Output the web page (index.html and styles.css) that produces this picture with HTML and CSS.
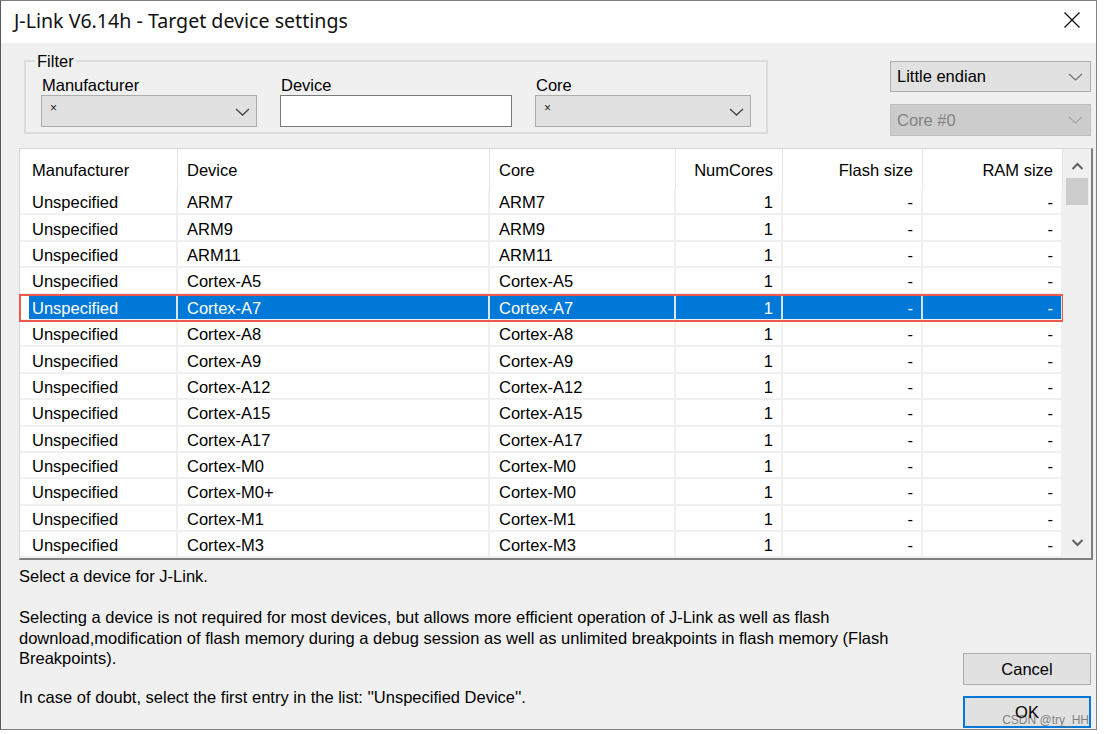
FILE: index.html
```html
<!DOCTYPE html>
<html>
<head>
<meta charset="utf-8">
<link rel="stylesheet" href="styles.css">
</head>
<body>
<div class="window">
  <div class="titlebar">
    <span class="title">J-Link V6.14h - Target device settings</span>
    <span class="close"><svg width="18" height="18" viewBox="0 0 18 18"><path d="M1.5 1.5L16.5 16.5M16.5 1.5L1.5 16.5" stroke="#111" stroke-width="1.3" fill="none"/></svg></span>
  </div>
  <div class="body">
    <div class="top">
      <fieldset class="filter">
        <legend>Filter</legend>
        <div class="field">
          <label>Manufacturer</label>
          <div class="combo w216"><span class="star">×</span><svg class="chev" width="15" height="8" viewBox="0 0 15 8"><path d="M1 1L7.5 7L14 1" fill="none" stroke="#444" stroke-width="1.3"/></svg></div>
        </div>
        <div class="field">
          <label>Device</label>
          <div class="input"></div>
        </div>
        <div class="field">
          <label>Core</label>
          <div class="combo w216"><span class="star">×</span><svg class="chev" width="15" height="8" viewBox="0 0 15 8"><path d="M1 1L7.5 7L14 1" fill="none" stroke="#444" stroke-width="1.3"/></svg></div>
        </div>
      </fieldset>
      <div class="side">
        <div class="combo endian"><span>Little endian</span><svg width="15" height="8" viewBox="0 0 15 8"><path d="M1 1L7.5 7L14 1" fill="none" stroke="#707070" stroke-width="1.1"/></svg></div>
        <div class="combo disabled"><span>Core #0</span><svg width="15" height="8" viewBox="0 0 15 8"><path d="M1 1L7.5 7L14 1" fill="none" stroke="#a6a6a6" stroke-width="1.1"/></svg></div>
      </div>
    </div>

    <div class="list">
      <div class="grid">
        <div class="row head">
          <div class="c">Manufacturer</div><div class="c">Device</div><div class="c">Core</div><div class="c r">NumCores</div><div class="c r">Flash size</div><div class="c r">RAM size</div>
        </div>
        <div class="row"><div class="c">Unspecified</div><div class="c">ARM7</div><div class="c">ARM7</div><div class="c r">1</div><div class="c r">-</div><div class="c r">-</div></div>
        <div class="row"><div class="c">Unspecified</div><div class="c">ARM9</div><div class="c">ARM9</div><div class="c r">1</div><div class="c r">-</div><div class="c r">-</div></div>
        <div class="row"><div class="c">Unspecified</div><div class="c">ARM11</div><div class="c">ARM11</div><div class="c r">1</div><div class="c r">-</div><div class="c r">-</div></div>
        <div class="row"><div class="c">Unspecified</div><div class="c">Cortex-A5</div><div class="c">Cortex-A5</div><div class="c r">1</div><div class="c r">-</div><div class="c r">-</div></div>
        <div class="row sel"><div class="c">Unspecified</div><div class="c">Cortex-A7</div><div class="c">Cortex-A7</div><div class="c r">1</div><div class="c r">-</div><div class="c r">-</div></div>
        <div class="row"><div class="c">Unspecified</div><div class="c">Cortex-A8</div><div class="c">Cortex-A8</div><div class="c r">1</div><div class="c r">-</div><div class="c r">-</div></div>
        <div class="row"><div class="c">Unspecified</div><div class="c">Cortex-A9</div><div class="c">Cortex-A9</div><div class="c r">1</div><div class="c r">-</div><div class="c r">-</div></div>
        <div class="row"><div class="c">Unspecified</div><div class="c">Cortex-A12</div><div class="c">Cortex-A12</div><div class="c r">1</div><div class="c r">-</div><div class="c r">-</div></div>
        <div class="row"><div class="c">Unspecified</div><div class="c">Cortex-A15</div><div class="c">Cortex-A15</div><div class="c r">1</div><div class="c r">-</div><div class="c r">-</div></div>
        <div class="row"><div class="c">Unspecified</div><div class="c">Cortex-A17</div><div class="c">Cortex-A17</div><div class="c r">1</div><div class="c r">-</div><div class="c r">-</div></div>
        <div class="row"><div class="c">Unspecified</div><div class="c">Cortex-M0</div><div class="c">Cortex-M0</div><div class="c r">1</div><div class="c r">-</div><div class="c r">-</div></div>
        <div class="row"><div class="c">Unspecified</div><div class="c">Cortex-M0+</div><div class="c">Cortex-M0</div><div class="c r">1</div><div class="c r">-</div><div class="c r">-</div></div>
        <div class="row"><div class="c">Unspecified</div><div class="c">Cortex-M1</div><div class="c">Cortex-M1</div><div class="c r">1</div><div class="c r">-</div><div class="c r">-</div></div>
        <div class="row"><div class="c">Unspecified</div><div class="c">Cortex-M3</div><div class="c">Cortex-M3</div><div class="c r">1</div><div class="c r">-</div><div class="c r">-</div></div>
      </div>
      <div class="scroll">
        <div class="arrow up"><svg width="13" height="8" viewBox="0 0 13 8"><path d="M1.5 7L6.5 2L11.5 7" fill="none" stroke="#606060" stroke-width="2"/></svg></div>
        <div class="thumb"></div>
        <div class="track"></div>
        <div class="arrow down"><svg width="13" height="8" viewBox="0 0 13 8"><path d="M1.5 1L6.5 6L11.5 1" fill="none" stroke="#606060" stroke-width="2"/></svg></div>
      </div>
    </div>

    <div class="bottom">
      <div class="info">
        <p>Select a device for J-Link.</p>
        <p>Selecting a device is not required for most devices, but allows more efficient operation of J-Link as well as flash<br>download,modification of flash memory during a debug session as well as unlimited breakpoints in flash memory (Flash<br>Breakpoints).</p>
        <p class="last">In case of doubt, select the first entry in the list: ''Unspecified Device''.</p>
      </div>
      <div class="buttons">
        <button class="btn">Cancel</button>
        <button class="btn ok"><span class="oklabel">OK</span><span class="watermark">CSDN @try_HH</span></button>
      </div>
    </div>
  </div>
</div>
</body>
</html>
```

FILE: styles.css
```css
* { box-sizing: border-box; }
html, body { margin: 0; background: #fff; }
body {
  font-family: "Liberation Sans", Arial, sans-serif;
  font-size: 16.5px;
  color: #000;
}
.window {
  width: 1097px;
  height: 730px;
  border: 1px solid #808080;
  border-left: 1px solid #5a5a5a;
  display: flex;
  flex-direction: column;
  background: #f0f0f0;
}
.titlebar {
  height: 42px;
  flex: none;
  background: #fff;
  display: flex;
  align-items: center;
  justify-content: space-between;
  padding: 0 15px 4px 13px;
}
.title {
  font-family: "Noto Sans", "Open Sans", sans-serif;
  font-size: 19.6px;
  color: #111;
}
.close { display: flex; }
.body {
  flex: 1;
  display: flex;
  flex-direction: column;
}
.top {
  display: flex;
  align-items: flex-start;
}
.filter {
  margin: 8px 0 0 23px;
  padding: 5px 15px;
  border: 2px solid #dcdcdc;
  width: 744px;
  min-width: 0;
  display: flex;
  gap: 23px;
}
.filter legend {
  padding: 0 2px;
  margin-left: -6px;
  line-height: 20px;
}
.field {
  display: flex;
  flex-direction: column;
}
.field label {
  height: 19px;
  line-height: 19px;
  padding-left: 1px;
}
.combo {
  height: 32px;
  border: 1px solid #adadad;
  background: #e1e1e1;
  display: flex;
  align-items: center;
  justify-content: space-between;
  padding: 0 6px 0 6px;
}
.w216 { width: 216px; padding-left: 8px; }
.w216 .chev { margin-top: 2px; }
.star {
  font-size: 12px;
  line-height: 12px;
  margin-bottom: 6px;
  color: #222;
}
.input {
  width: 232px;
  height: 32px;
  background: #fff;
  border: 1px solid #7a7a7a;
}
.side {
  margin: 18px 5px 0 auto;
  width: 201px;
  display: flex;
  flex-direction: column;
  gap: 12px;
}
.endian { height: 31px; padding-right: 7px; }
.disabled {
  height: 32px;
  background: #cccccc;
  border-color: #bfbfbf;
  color: #838383;
  padding-right: 7px;
}

/* list view */
.list {
  margin: 12px 3px 0 18px;
  display: flex;
  background: #fff;
  border-top: 1px solid #d6d6d6;
  border-left: 1px solid #d6d6d6;
  border-right: 2px solid #7f7f7f;
  border-bottom: 2px solid #7f7f7f;
}
.grid { width: 1043px; }
.row {
  display: grid;
  grid-template-columns: 158px 312px 186px 107px 140px 140px;
  height: 26.4px;
  border-bottom: 2px solid #f0f0f0;
}
.row .c {
  display: flex;
  align-items: center;
  padding: 3px 0 0 9px;
  white-space: nowrap;
  overflow: hidden;
  border-right: 2px solid #f0f0f0;
}
.row .c:first-child { padding-left: 12px; }
.row .c.r {
  justify-content: flex-end;
  padding-left: 0;
  padding-right: 8px;
}
.row.head {
  height: 40px;
  border-bottom: none;
}
.row.head .c {
  border-right: 1px solid #e6e6e6;
  padding-top: 2px;
}
.row.head .c.r { padding-right: 9px; }
.row.sel {
  background: #0078d7;
  color: #fff;
  outline: 2px solid #ec5a4e;
  outline-offset: -1px;
}
.row.sel .c { border-right-color: #d5e7f7; }
.row.sel .c:first-child {
  background: linear-gradient(to right, #fff 9px, #0078d7 9px);
}

.scroll {
  width: 28px;
  background: #f0f0f0;
  display: flex;
  flex-direction: column;
  align-items: center;
}
.arrow {
  height: 29px;
  width: 100%;
  display: flex;
  justify-content: center;
  align-items: center;
}
.arrow.up { padding-top: 5px; }
.arrow.down { padding-bottom: 1px; }
.thumb {
  width: 22px;
  height: 27px;
  background: #cdcdcd;
}
.track { flex: 1; }

/* bottom */
.bottom {
  flex: 1;
  display: flex;
  justify-content: space-between;
  padding: 6px 5px 3px 18px;
}
.info { white-space: nowrap; }
.info p {
  margin: 0 0 20.5px;
  line-height: 20.5px;
}
.info p.last { margin-top: -2px; }
.buttons {
  align-self: flex-end;
  width: 128px;
  display: flex;
  flex-direction: column;
  gap: 11px;
}
.btn {
  height: 32px;
  background: #e1e1e1;
  border: 1px solid #adadad;
  font: inherit;
  color: #000;
  padding: 0;
}
.btn.ok {
  border: 2px solid #0078d7;
  display: flex;
  align-items: flex-start;
  justify-content: flex-end;
  padding: 3px 0 0 0;
  position: relative;
}
.oklabel {
  position: absolute;
  left: 0;
  right: 0;
  top: 5px;
  text-align: center;
}
.watermark {
  font-size: 12px;
  line-height: 14px;
  margin-top: 12px;
  color: rgba(110, 110, 110, 0.85);
}
```
